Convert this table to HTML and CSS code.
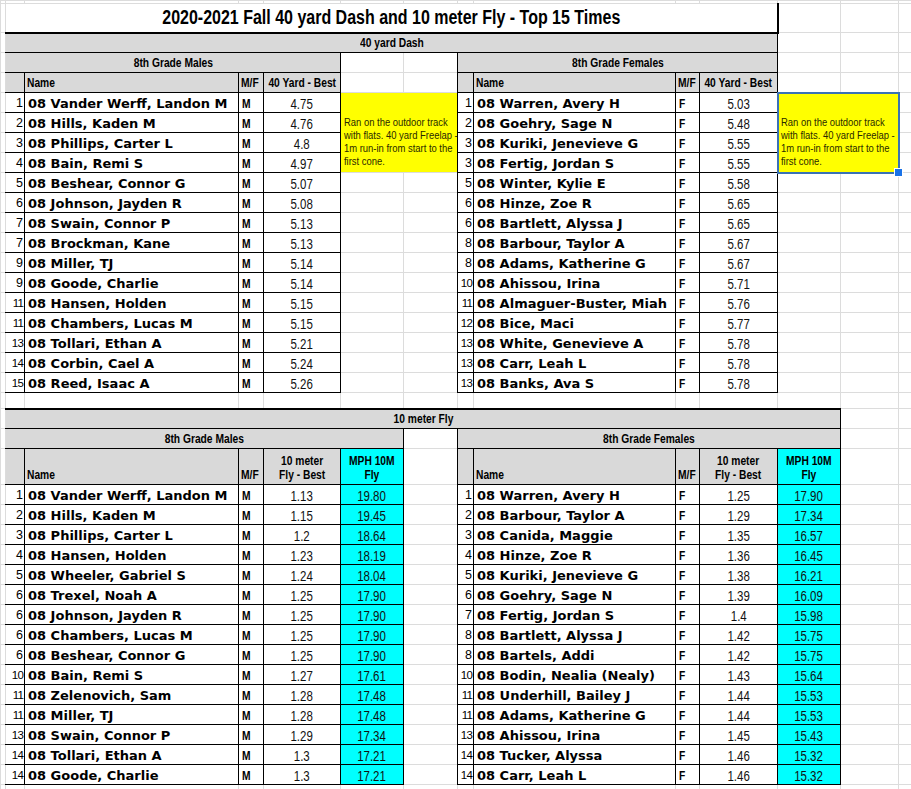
FILE: index.html
```html
<!DOCTYPE html>
<html>
<head>
<meta charset="utf-8">
<link rel="stylesheet" href="styles.css">
</head>
<body>
<table class="sheet">
<colgroup>
<col class="w5"><col class="w19"><col class="w214"><col class="w25"><col class="w77"><col class="w63"><col class="w54"><col class="w16"><col class="w202"><col class="w24"><col class="w78"><col class="w63"><col class="w58"><col class="w30">
</colgroup>
<tr class="h3"><td></td><td></td><td></td><td></td><td></td><td></td><td></td><td></td><td></td><td></td><td></td><td></td><td></td><td></td></tr>
<tr class="h29"><td></td><td colspan="10" class="ttl R B"><span class="n">2020-2021 Fall 40 yard Dash and 10 meter Fly - Top 15 Times</span></td><td></td><td></td><td></td></tr>
<tr class="h20"><td></td><td colspan="10" class="g sec r b"><span class="n">40 yard Dash</span></td><td></td><td></td><td></td></tr>
<tr class="h20"><td></td><td colspan="4" class="g sec r b"><span class="n">8th Grade Males</span></td><td></td><td></td><td colspan="4" class="g sec l r b"><span class="n">8th Grade Females</span></td><td></td><td></td><td></td></tr>
<tr class="h20"><td></td><td class="g rk b"></td><td class="g hd box"><span class="n">Name</span></td><td class="g hd box"><span class="n">M/F</span></td><td class="g hd box c"><span class="n">40 Yard - Best</span></td><td></td><td></td><td class="g rk l b"></td><td class="g hd box"><span class="n">Name</span></td><td class="g hd box"><span class="n">M/F</span></td><td class="g hd box c"><span class="n">40 Yard - Best</span></td><td></td><td></td><td></td></tr>

<tr class="h20"><td></td><td class="rk box0">1</td><td class="nm box">08 Vander Werff, Landon M</td><td class="mf box"><span class="n">M</span></td><td class="v box"><span class="n">4.75</span></td><td colspan="2" rowspan="4" class="note l r"><span class="n">Ran on the outdoor track<br>with flats. 40 yard Freelap -<br>1m run-in from start to the<br>first cone.</span></td><td class="rk box">1</td><td class="nm box">08 Warren, Avery H</td><td class="mf box"><span class="n">F</span></td><td class="v box"><span class="n">5.03</span></td><td colspan="2" rowspan="4" class="note sel"><span class="n">Ran on the outdoor track<br>with flats. 40 yard Freelap -<br>1m run-in from start to the<br>first cone.</span><span class="handle"></span></td><td></td></tr>
<tr class="h20"><td></td><td class="rk box0">2</td><td class="nm box">08 Hills, Kaden M</td><td class="mf box"><span class="n">M</span></td><td class="v box"><span class="n">4.76</span></td><td class="rk box">2</td><td class="nm box">08 Goehry, Sage N</td><td class="mf box"><span class="n">F</span></td><td class="v box"><span class="n">5.48</span></td><td></td></tr>
<tr class="h20"><td></td><td class="rk box0">3</td><td class="nm box">08 Phillips, Carter L</td><td class="mf box"><span class="n">M</span></td><td class="v box"><span class="n">4.8</span></td><td class="rk box">3</td><td class="nm box">08 Kuriki, Jenevieve G</td><td class="mf box"><span class="n">F</span></td><td class="v box"><span class="n">5.55</span></td><td></td></tr>
<tr class="h20"><td></td><td class="rk box0">4</td><td class="nm box">08 Bain, Remi S</td><td class="mf box"><span class="n">M</span></td><td class="v box"><span class="n">4.97</span></td><td class="rk box">3</td><td class="nm box">08 Fertig, Jordan S</td><td class="mf box"><span class="n">F</span></td><td class="v box"><span class="n">5.55</span></td><td></td></tr>
<tr class="h20"><td></td><td class="rk box0">5</td><td class="nm box">08 Beshear, Connor G</td><td class="mf box"><span class="n">M</span></td><td class="v box"><span class="n">5.07</span></td><td></td><td></td><td class="rk box">5</td><td class="nm box">08 Winter, Kylie E</td><td class="mf box"><span class="n">F</span></td><td class="v box"><span class="n">5.58</span></td><td></td><td></td><td></td></tr>
<tr class="h20"><td></td><td class="rk box0">6</td><td class="nm box">08 Johnson, Jayden R</td><td class="mf box"><span class="n">M</span></td><td class="v box"><span class="n">5.08</span></td><td></td><td></td><td class="rk box">6</td><td class="nm box">08 Hinze, Zoe R</td><td class="mf box"><span class="n">F</span></td><td class="v box"><span class="n">5.65</span></td><td></td><td></td><td></td></tr>
<tr class="h20"><td></td><td class="rk box0">7</td><td class="nm box">08 Swain, Connor P</td><td class="mf box"><span class="n">M</span></td><td class="v box"><span class="n">5.13</span></td><td></td><td></td><td class="rk box">6</td><td class="nm box">08 Bartlett, Alyssa J</td><td class="mf box"><span class="n">F</span></td><td class="v box"><span class="n">5.65</span></td><td></td><td></td><td></td></tr>
<tr class="h20"><td></td><td class="rk box0">7</td><td class="nm box">08 Brockman, Kane</td><td class="mf box"><span class="n">M</span></td><td class="v box"><span class="n">5.13</span></td><td></td><td></td><td class="rk box">8</td><td class="nm box">08 Barbour, Taylor A</td><td class="mf box"><span class="n">F</span></td><td class="v box"><span class="n">5.67</span></td><td></td><td></td><td></td></tr>
<tr class="h20"><td></td><td class="rk box0">9</td><td class="nm box">08 Miller, TJ</td><td class="mf box"><span class="n">M</span></td><td class="v box"><span class="n">5.14</span></td><td></td><td></td><td class="rk box">8</td><td class="nm box">08 Adams, Katherine G</td><td class="mf box"><span class="n">F</span></td><td class="v box"><span class="n">5.67</span></td><td></td><td></td><td></td></tr>
<tr class="h20"><td></td><td class="rk box0">9</td><td class="nm box">08 Goode, Charlie</td><td class="mf box"><span class="n">M</span></td><td class="v box"><span class="n">5.14</span></td><td></td><td></td><td class="rk box r2">10</td><td class="nm box">08 Ahissou, Irina</td><td class="mf box"><span class="n">F</span></td><td class="v box"><span class="n">5.71</span></td><td></td><td></td><td></td></tr>
<tr class="h20"><td></td><td class="rk box0 r2">11</td><td class="nm box">08 Hansen, Holden</td><td class="mf box"><span class="n">M</span></td><td class="v box"><span class="n">5.15</span></td><td></td><td></td><td class="rk box r2">11</td><td class="nm box">08 Almaguer-Buster, Miah</td><td class="mf box"><span class="n">F</span></td><td class="v box"><span class="n">5.76</span></td><td></td><td></td><td></td></tr>
<tr class="h20"><td></td><td class="rk box0 r2">11</td><td class="nm box">08 Chambers, Lucas M</td><td class="mf box"><span class="n">M</span></td><td class="v box"><span class="n">5.15</span></td><td></td><td></td><td class="rk box r2">12</td><td class="nm box">08 Bice, Maci</td><td class="mf box"><span class="n">F</span></td><td class="v box"><span class="n">5.77</span></td><td></td><td></td><td></td></tr>
<tr class="h20"><td></td><td class="rk box0 r2">13</td><td class="nm box">08 Tollari, Ethan A</td><td class="mf box"><span class="n">M</span></td><td class="v box"><span class="n">5.21</span></td><td></td><td></td><td class="rk box r2">13</td><td class="nm box">08 White, Genevieve A</td><td class="mf box"><span class="n">F</span></td><td class="v box"><span class="n">5.78</span></td><td></td><td></td><td></td></tr>
<tr class="h20"><td></td><td class="rk box0 r2">14</td><td class="nm box">08 Corbin, Cael A</td><td class="mf box"><span class="n">M</span></td><td class="v box"><span class="n">5.24</span></td><td></td><td></td><td class="rk box r2">13</td><td class="nm box">08 Carr, Leah L</td><td class="mf box"><span class="n">F</span></td><td class="v box"><span class="n">5.78</span></td><td></td><td></td><td></td></tr>
<tr class="h20"><td></td><td class="rk box0 r2">15</td><td class="nm box">08 Reed, Isaac A</td><td class="mf box"><span class="n">M</span></td><td class="v box"><span class="n">5.26</span></td><td></td><td></td><td class="rk box r2">13</td><td class="nm box">08 Banks, Ava S</td><td class="mf box"><span class="n">F</span></td><td class="v box"><span class="n">5.78</span></td><td></td><td></td><td></td></tr>

<tr class="h16"><td></td><td></td><td></td><td></td><td></td><td></td><td></td><td></td><td></td><td></td><td></td><td></td><td></td><td></td></tr>
<tr class="h20"><td></td><td colspan="11" class="g sec T r b"><span class="n">10 meter Fly</span></td><td></td><td></td></tr>
<tr class="h20"><td></td><td colspan="5" class="g sec r b"><span class="n">8th Grade Males</span></td><td></td><td colspan="5" class="g sec l r b"><span class="n">8th Grade Females</span></td><td></td><td></td></tr>
<tr class="h36"><td></td><td class="g rk b"></td><td class="g hd box"><span class="n">Name</span></td><td class="g hd box"><span class="n">M/F</span></td><td class="g hd box c"><span class="n">10 meter<br>Fly - Best</span></td><td class="cy hd box c"><span class="n">MPH 10M<br>Fly</span></td><td></td><td class="g rk l b"></td><td class="g hd box"><span class="n">Name</span></td><td class="g hd box"><span class="n">M/F</span></td><td class="g hd box c"><span class="n">10 meter<br>Fly - Best</span></td><td class="cy hd box c"><span class="n">MPH 10M<br>Fly</span></td><td></td><td></td></tr>

<tr class="h20"><td></td><td class="rk box0">1</td><td class="nm box">08 Vander Werff, Landon M</td><td class="mf box"><span class="n">M</span></td><td class="v box"><span class="n">1.13</span></td><td class="v cy box"><span class="n">19.80</span></td><td></td><td class="rk box">1</td><td class="nm box">08 Warren, Avery H</td><td class="mf box"><span class="n">F</span></td><td class="v box"><span class="n">1.25</span></td><td class="v cy box"><span class="n">17.90</span></td><td></td><td></td></tr>
<tr class="h20"><td></td><td class="rk box0">2</td><td class="nm box">08 Hills, Kaden M</td><td class="mf box"><span class="n">M</span></td><td class="v box"><span class="n">1.15</span></td><td class="v cy box"><span class="n">19.45</span></td><td></td><td class="rk box">2</td><td class="nm box">08 Barbour, Taylor A</td><td class="mf box"><span class="n">F</span></td><td class="v box"><span class="n">1.29</span></td><td class="v cy box"><span class="n">17.34</span></td><td></td><td></td></tr>
<tr class="h20"><td></td><td class="rk box0">3</td><td class="nm box">08 Phillips, Carter L</td><td class="mf box"><span class="n">M</span></td><td class="v box"><span class="n">1.2</span></td><td class="v cy box"><span class="n">18.64</span></td><td></td><td class="rk box">3</td><td class="nm box">08 Canida, Maggie</td><td class="mf box"><span class="n">F</span></td><td class="v box"><span class="n">1.35</span></td><td class="v cy box"><span class="n">16.57</span></td><td></td><td></td></tr>
<tr class="h20"><td></td><td class="rk box0">4</td><td class="nm box">08 Hansen, Holden</td><td class="mf box"><span class="n">M</span></td><td class="v box"><span class="n">1.23</span></td><td class="v cy box"><span class="n">18.19</span></td><td></td><td class="rk box">4</td><td class="nm box">08 Hinze, Zoe R</td><td class="mf box"><span class="n">F</span></td><td class="v box"><span class="n">1.36</span></td><td class="v cy box"><span class="n">16.45</span></td><td></td><td></td></tr>
<tr class="h20"><td></td><td class="rk box0">5</td><td class="nm box">08 Wheeler, Gabriel S</td><td class="mf box"><span class="n">M</span></td><td class="v box"><span class="n">1.24</span></td><td class="v cy box"><span class="n">18.04</span></td><td></td><td class="rk box">5</td><td class="nm box">08 Kuriki, Jenevieve G</td><td class="mf box"><span class="n">F</span></td><td class="v box"><span class="n">1.38</span></td><td class="v cy box"><span class="n">16.21</span></td><td></td><td></td></tr>
<tr class="h20"><td></td><td class="rk box0">6</td><td class="nm box">08 Trexel, Noah A</td><td class="mf box"><span class="n">M</span></td><td class="v box"><span class="n">1.25</span></td><td class="v cy box"><span class="n">17.90</span></td><td></td><td class="rk box">6</td><td class="nm box">08 Goehry, Sage N</td><td class="mf box"><span class="n">F</span></td><td class="v box"><span class="n">1.39</span></td><td class="v cy box"><span class="n">16.09</span></td><td></td><td></td></tr>
<tr class="h20"><td></td><td class="rk box0">6</td><td class="nm box">08 Johnson, Jayden R</td><td class="mf box"><span class="n">M</span></td><td class="v box"><span class="n">1.25</span></td><td class="v cy box"><span class="n">17.90</span></td><td></td><td class="rk box">7</td><td class="nm box">08 Fertig, Jordan S</td><td class="mf box"><span class="n">F</span></td><td class="v box"><span class="n">1.4</span></td><td class="v cy box"><span class="n">15.98</span></td><td></td><td></td></tr>
<tr class="h20"><td></td><td class="rk box0">6</td><td class="nm box">08 Chambers, Lucas M</td><td class="mf box"><span class="n">M</span></td><td class="v box"><span class="n">1.25</span></td><td class="v cy box"><span class="n">17.90</span></td><td></td><td class="rk box">8</td><td class="nm box">08 Bartlett, Alyssa J</td><td class="mf box"><span class="n">F</span></td><td class="v box"><span class="n">1.42</span></td><td class="v cy box"><span class="n">15.75</span></td><td></td><td></td></tr>
<tr class="h20"><td></td><td class="rk box0">6</td><td class="nm box">08 Beshear, Connor G</td><td class="mf box"><span class="n">M</span></td><td class="v box"><span class="n">1.25</span></td><td class="v cy box"><span class="n">17.90</span></td><td></td><td class="rk box">8</td><td class="nm box">08 Bartels, Addi</td><td class="mf box"><span class="n">F</span></td><td class="v box"><span class="n">1.42</span></td><td class="v cy box"><span class="n">15.75</span></td><td></td><td></td></tr>
<tr class="h20"><td></td><td class="rk box0 r2">10</td><td class="nm box">08 Bain, Remi S</td><td class="mf box"><span class="n">M</span></td><td class="v box"><span class="n">1.27</span></td><td class="v cy box"><span class="n">17.61</span></td><td></td><td class="rk box r2">10</td><td class="nm box">08 Bodin, Nealia (Nealy)</td><td class="mf box"><span class="n">F</span></td><td class="v box"><span class="n">1.43</span></td><td class="v cy box"><span class="n">15.64</span></td><td></td><td></td></tr>
<tr class="h20"><td></td><td class="rk box0 r2">11</td><td class="nm box">08 Zelenovich, Sam</td><td class="mf box"><span class="n">M</span></td><td class="v box"><span class="n">1.28</span></td><td class="v cy box"><span class="n">17.48</span></td><td></td><td class="rk box r2">11</td><td class="nm box">08 Underhill, Bailey J</td><td class="mf box"><span class="n">F</span></td><td class="v box"><span class="n">1.44</span></td><td class="v cy box"><span class="n">15.53</span></td><td></td><td></td></tr>
<tr class="h20"><td></td><td class="rk box0 r2">11</td><td class="nm box">08 Miller, TJ</td><td class="mf box"><span class="n">M</span></td><td class="v box"><span class="n">1.28</span></td><td class="v cy box"><span class="n">17.48</span></td><td></td><td class="rk box r2">11</td><td class="nm box">08 Adams, Katherine G</td><td class="mf box"><span class="n">F</span></td><td class="v box"><span class="n">1.44</span></td><td class="v cy box"><span class="n">15.53</span></td><td></td><td></td></tr>
<tr class="h20"><td></td><td class="rk box0 r2">13</td><td class="nm box">08 Swain, Connor P</td><td class="mf box"><span class="n">M</span></td><td class="v box"><span class="n">1.29</span></td><td class="v cy box"><span class="n">17.34</span></td><td></td><td class="rk box r2">13</td><td class="nm box">08 Ahissou, Irina</td><td class="mf box"><span class="n">F</span></td><td class="v box"><span class="n">1.45</span></td><td class="v cy box"><span class="n">15.43</span></td><td></td><td></td></tr>
<tr class="h20"><td></td><td class="rk box0 r2">14</td><td class="nm box">08 Tollari, Ethan A</td><td class="mf box"><span class="n">M</span></td><td class="v box"><span class="n">1.3</span></td><td class="v cy box"><span class="n">17.21</span></td><td></td><td class="rk box r2">14</td><td class="nm box">08 Tucker, Alyssa</td><td class="mf box"><span class="n">F</span></td><td class="v box"><span class="n">1.46</span></td><td class="v cy box"><span class="n">15.32</span></td><td></td><td></td></tr>
<tr class="h20"><td></td><td class="rk box0 r2">14</td><td class="nm box">08 Goode, Charlie</td><td class="mf box"><span class="n">M</span></td><td class="v box"><span class="n">1.3</span></td><td class="v cy box"><span class="n">17.21</span></td><td></td><td class="rk box r2">14</td><td class="nm box">08 Carr, Leah L</td><td class="mf box"><span class="n">F</span></td><td class="v box"><span class="n">1.46</span></td><td class="v cy box"><span class="n">15.32</span></td><td></td><td></td></tr>
<tr class="h20"><td></td><td></td><td></td><td></td><td></td><td></td><td></td><td></td><td></td><td></td><td></td><td></td><td></td><td></td></tr>
</table>
</body>
</html>
```

FILE: styles.css
```css
html, body {
  margin: 0;
  background: #fff;
  overflow: hidden;
}
body {
  font-family: "Liberation Sans", Arial, sans-serif;
  color: #000;
}
.sheet {
  border-collapse: collapse;
  table-layout: fixed;
  width: 928px;
}
.w5 { width: 5px; }
.w19 { width: 19px; }
.w214 { width: 214px; }
.w25 { width: 25px; }
.w77 { width: 77px; }
.w63 { width: 63px; }
.w54 { width: 54px; }
.w16 { width: 16px; }
.w202 { width: 202px; }
.w24 { width: 24px; }
.w78 { width: 78px; }
.w58 { width: 58px; }
.w30 { width: 30px; }

.h3 { height: 3px; }
.h16 { height: 16px; }
.h20 { height: 20px; }
.h29 { height: 29px; }
.h36 { height: 36px; }

.sheet td {
  border: 1px solid #dcdcdc;
  padding: 0 2px 1px 2px;
  font-size: 12px;
  line-height: 14px;
  vertical-align: bottom;
  white-space: nowrap;
  overflow: hidden;
}
.h3 td { line-height: 0; font-size: 0; padding: 0; }

/* narrow (condensed) text */
.n {
  display: inline-block;
  transform: scaleX(0.82);
  transform-origin: left bottom;
}
.c .n, .v .n, .sec .n, .ttl .n {
  transform-origin: center bottom;
  margin: 0 -30px;
}

.t { border-top: 1px double #000 !important; }
.b { border-bottom: 1px double #000 !important; }
.l { border-left: 1px double #000 !important; }
.r { border-right: 1px double #000 !important; }
.T { border-top: 2px solid #000 !important; }
.B { border-bottom: 2px solid #000 !important; }
.R { border-right: 2px solid #000 !important; }
.sheet td.box {
  border: 1px double #000;
}
.sheet td.box0 {
  border-top: 1px double #000;
  border-bottom: 1px double #000;
  border-right: 1px double #000;
}

.g { background: #d9d9d9; }
.cy { background: #00ffff; }

.ttl {
  text-align: center;
  vertical-align: middle !important;
  font-size: 19.5px !important;
  font-weight: bold;
  line-height: 22px !important;
}
.sec {
  text-align: center;
  font-weight: bold;
  font-size: 12.5px !important;
  padding-bottom: 2px !important;
}
.hd {
  font-weight: bold;
  font-size: 12.5px !important;
  padding-bottom: 2px !important;
}
.c { text-align: center; }
.rk {
  text-align: right;
  padding: 0 1px 2px 0 !important;
  font-size: 12.5px !important;
}
.r2 { font-size: 11.5px !important; letter-spacing: -0.8px; padding-right: 1px !important; }
.nm {
  font-family: "DejaVu Sans", Verdana, sans-serif;
  font-weight: bold;
  font-size: 13px !important;
  padding-left: 3px !important;
}
.mf {
  font-weight: bold;
  font-size: 12.5px !important;
  padding-left: 3px !important;
}
.v {
  text-align: center;
  font-size: 14px !important;
  color: #111;
}
.note {
  background: #ffff00;
  font-size: 11.5px !important;
  line-height: 13px !important;
  color: #2a2a00;
  padding: 0 0 4px 3px !important;
  vertical-align: bottom;
}
.sel {
  position: relative;
  overflow: visible !important;
  outline: 2px solid #3a72b5;
  outline-offset: -1px;
}
.handle {
  position: absolute;
  right: -5px;
  bottom: -5px;
  width: 7px;
  height: 7px;
  background: #1a73e8;
  border: 1px solid #fff;
}
```
